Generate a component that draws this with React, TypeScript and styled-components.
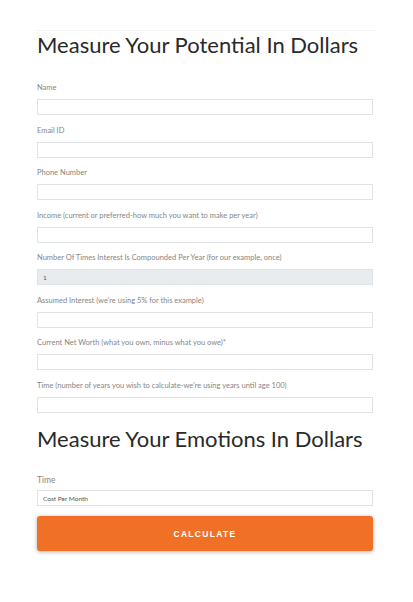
import React from 'react'
import styled, { createGlobalStyle } from 'styled-components'

const GlobalStyle = createGlobalStyle`
  html, body {
    margin: 0;
    padding: 0;
    background: #ffffff;
  }
  * {
    box-sizing: border-box;
  }
`

const potentialFields: { label: string; value?: string; disabled?: boolean }[] = [
  { label: 'Name' },
  { label: 'Email ID' },
  { label: 'Phone Number' },
  { label: 'Income (current or preferred-how much you want to make per year)' },
  { label: 'Number Of Times Interest Is Compounded Per Year (for our example, once)', value: '1', disabled: true },
  { label: "Assumed Interest (we're using 5% for this example)" },
  { label: 'Current Net Worth (what you own, minus what you owe)*' },
  { label: "Time (number of years you wish to calculate-we're using years until age 100)" },
]

const App: React.FC = () => {
  return (
    <>
      <GlobalStyle />
      <Page>
        <Section>
          <Heading>Measure Your Potential In Dollars</Heading>
          <Fields>
            {potentialFields.map((f) => (
              <Field key={f.label}>
                <Label>{f.label}</Label>
                <Input $disabled={f.disabled}>{f.value}</Input>
              </Field>
            ))}
          </Fields>
          <Heading $second>Measure Your Emotions In Dollars</Heading>
          <Field $big>
            <Label $big>Time</Label>
            <Input>Cost Per Month</Input>
          </Field>
          <Button type="button">Calculate</Button>
        </Section>
      </Page>
    </>
  )
}

const Page = styled.div`
  width: 413px;
  min-height: 602px;
  padding-top: 30px;
  background: #fff;
`

const Section = styled.div`
  margin: 0 37px 0 35px;
  padding: 0 3px 0 2px;
  border-top: 1px solid #f4f4f4;
`

const Heading = styled.h2<{ $second?: boolean }>`
  margin: ${(p) => (p.$second ? '3px 0 23px' : '1px 0 25px')};
  font-family: 'Lato', 'Open Sans', sans-serif;
  font-weight: 400;
  font-size: 22px;
  line-height: 26px;
  letter-spacing: 0;
  color: #2a2a2a;
`

const Fields = styled.div`
  display: flex;
  flex-direction: column;
`

const Field = styled.div<{ $big?: boolean }>`
  display: flex;
  flex-direction: column;
  gap: ${(p) => (p.$big ? '5px' : '6px')};
  margin-bottom: 10.5px;
`

const Label = styled.div<{ $big?: boolean }>`
  font-family: 'Lato', 'Noto Sans', sans-serif;
  font-size: ${(p) => (p.$big ? '8.5px' : '7.5px')};
  line-height: 10px;
  color: #868686;
`

const Input = styled.div<{ $disabled?: boolean }>`
  height: 16px;
  width: 100%;
  padding: 0 5px;
  display: flex;
  align-items: center;
  border: 1px solid #dfe2e6;
  background: ${(p) => (p.$disabled ? '#e9ecef' : '#fff')};
  font-family: 'Lato', 'Noto Sans', sans-serif;
  font-size: 6.5px;
  color: #555;
`

const Button = styled.button`
  display: block;
  width: 100%;
  height: 35px;
  margin-top: -0.5px;
  border: none;
  border-radius: 3px;
  background: #f07125;
  box-shadow: 0 1px 4px rgba(0, 0, 0, 0.3);
  color: #fff;
  font-family: 'Liberation Sans', Arial, sans-serif;
  font-weight: 700;
  font-size: 8.5px;
  letter-spacing: 1.3px;
  text-transform: uppercase;
  cursor: pointer;
`

export default App
